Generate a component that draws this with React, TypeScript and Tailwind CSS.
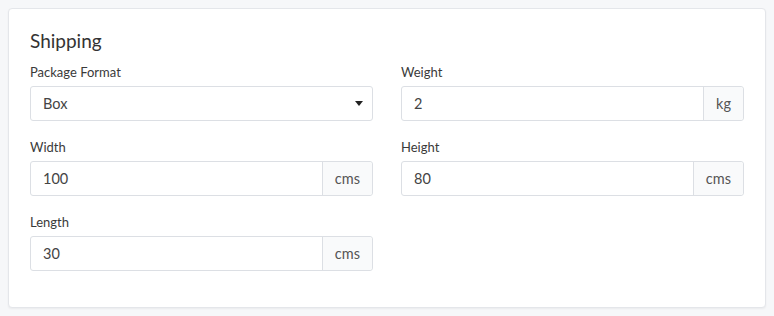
import * as React from "react";

type Field = {
  label: string;
  value: string;
  unit?: string;
  select?: boolean;
};

const fields: Field[] = [
  { label: "Package Format", value: "Box", select: true },
  { label: "Weight", value: "2", unit: "kg" },
  { label: "Width", value: "100", unit: "cms" },
  { label: "Height", value: "80", unit: "cms" },
  { label: "Length", value: "30", unit: "cms" },
];

function FieldInput({ field }: { field: Field }) {
  if (field.select) {
    return (
      <div className="flex h-[35px] items-center justify-between rounded-[3px] border border-[#dcdfe4] bg-white pl-3 pr-[9px] text-[14.5px] text-[#444]">
        <span>{field.value}</span>
        <svg width="8" height="5" viewBox="0 0 8 5">
          <path d="M0 0h8L4 5z" fill="#222" />
        </svg>
      </div>
    );
  }

  return (
    <div className="flex h-[35px] rounded-[3px] border border-[#dcdfe4] bg-white text-[14.5px] text-[#444]">
      <div className="flex flex-1 items-center px-3">{field.value}</div>
      {field.unit && (
        <div className="flex items-center rounded-r-[3px] border-l border-[#dcdfe4] bg-[#f9fafb] px-3 text-[#555]">
          {field.unit}
        </div>
      )}
    </div>
  );
}

export default function App() {
  return (
    <div className="min-h-screen bg-[#f6f7f9] p-2 font-['Lato',sans-serif]">
      <div className="rounded-[4px] border border-[#e4e6ea] bg-white px-[21px] pt-[20px] pb-[36px] shadow-[0_1px_2px_rgba(0,0,0,0.05)]">
        <h2 className="text-[19px] leading-[24px] text-[#333]">Shipping</h2>
        <div className="mt-[10px] grid grid-cols-2 gap-x-[28px] gap-y-[17px]">
          {fields.map((field) => (
            <div key={field.label}>
              <label className="mb-[5px] block text-[13px] leading-[18px] text-[#3a3a3a]">
                {field.label}
              </label>
              <FieldInput field={field} />
            </div>
          ))}
        </div>
      </div>
    </div>
  );
}
